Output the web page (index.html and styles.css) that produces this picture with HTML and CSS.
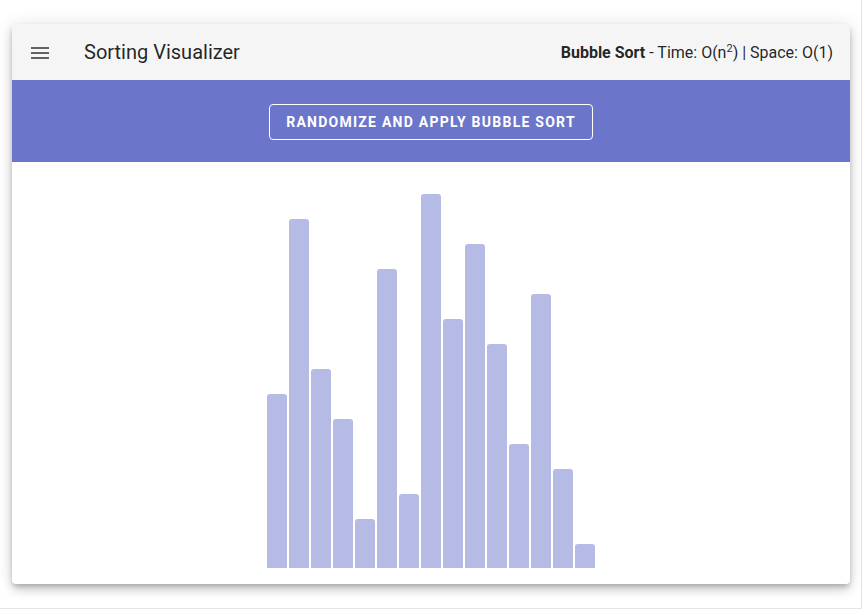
FILE: index.html
```html
<!DOCTYPE html>
<html lang="en">
<head>
<meta charset="utf-8">
<title>Sorting Visualizer</title>
<link rel="stylesheet" href="styles.css">
</head>
<body>
<div class="page">
  <div class="card">
    <header class="toolbar">
      <button class="nav-icon" aria-label="Menu">
        <svg width="24" height="24" viewBox="0 0 24 24"><path d="M3 6h18v2H3zM3 11h18v2H3zM3 16h18v2H3z" fill="currentColor"/></svg>
      </button>
      <div class="title">Sorting Visualizer</div>
      <div class="spacer"></div>
      <div class="complexity"><b>Bubble Sort</b> - Time: O(n<sup>2</sup>) | Space: O(1)</div>
    </header>
    <div class="band">
      <button class="outlined-btn">Randomize and apply bubble sort</button>
    </div>
    <div class="chart">
      <div class="bar" style="height:174px"></div>
      <div class="bar" style="height:349px"></div>
      <div class="bar" style="height:199px"></div>
      <div class="bar" style="height:149px"></div>
      <div class="bar" style="height:49px"></div>
      <div class="bar" style="height:299px"></div>
      <div class="bar" style="height:74px"></div>
      <div class="bar" style="height:374px"></div>
      <div class="bar" style="height:249px"></div>
      <div class="bar" style="height:324px"></div>
      <div class="bar" style="height:224px"></div>
      <div class="bar" style="height:124px"></div>
      <div class="bar" style="height:274px"></div>
      <div class="bar" style="height:99px"></div>
      <div class="bar" style="height:24px"></div>
    </div>
  </div>
</div>
</body>
</html>
```

FILE: styles.css
```css
html, body {
  margin: 0;
  padding: 0;
  background: #ffffff;
}

body {
  font-family: Roboto, "Noto Sans", "Liberation Sans", sans-serif;
  color: rgba(0, 0, 0, 0.87);
}

.page {
  box-sizing: border-box;
  width: 862px;
  height: 609px;
  padding: 24px 0 0 12px;
  border-right: 1px solid #e4e4e4;
  border-bottom: 1px solid #e4e4e4;
}

.card {
  width: 838px;
  background: #ffffff;
  border-radius: 4px;
  box-shadow: 0 3px 5px -1px rgba(0, 0, 0, 0.2), 0 6px 10px 0 rgba(0, 0, 0, 0.14), 0 1px 18px 0 rgba(0, 0, 0, 0.12);
  overflow: hidden;
}

.toolbar {
  height: 56px;
  display: flex;
  align-items: center;
  padding: 0 17px 0 16px;
  background: #f5f5f5;
}

.nav-icon {
  width: 24px;
  height: 24px;
  padding: 0;
  margin: 2px 32px 0 0;
  border: none;
  background: none;
  color: rgba(0, 0, 0, 0.6);
  display: flex;
}

.title {
  font-size: 20px;
  font-weight: 400;
  letter-spacing: 0;
}

.spacer {
  flex: 1;
}

.complexity {
  font-size: 16px;
  font-weight: 400;
}

.complexity b {
  font-weight: 700;
}

.complexity sup {
  font-size: 11px;
  line-height: 0;
}

.band {
  height: 82px;
  display: flex;
  align-items: center;
  justify-content: center;
  background: #6b76cb;
}

.outlined-btn {
  height: 36px;
  padding: 0 16px;
  margin-top: 2px;
  border: 1px solid #ffffff;
  border-radius: 4px;
  background: transparent;
  color: #ffffff;
  font-family: Roboto, "Noto Sans", "Liberation Sans", sans-serif;
  font-size: 14px;
  font-weight: 700;
  letter-spacing: 0.0892857em;
  text-transform: uppercase;
}

.chart {
  height: 375px;
  padding: 31px 0 16px;
  display: flex;
  align-items: flex-end;
  justify-content: center;
  gap: 2px;
}

.bar {
  width: 20px;
  background: #b5bbe5;
  border-radius: 3px 3px 0 0;
}
```
